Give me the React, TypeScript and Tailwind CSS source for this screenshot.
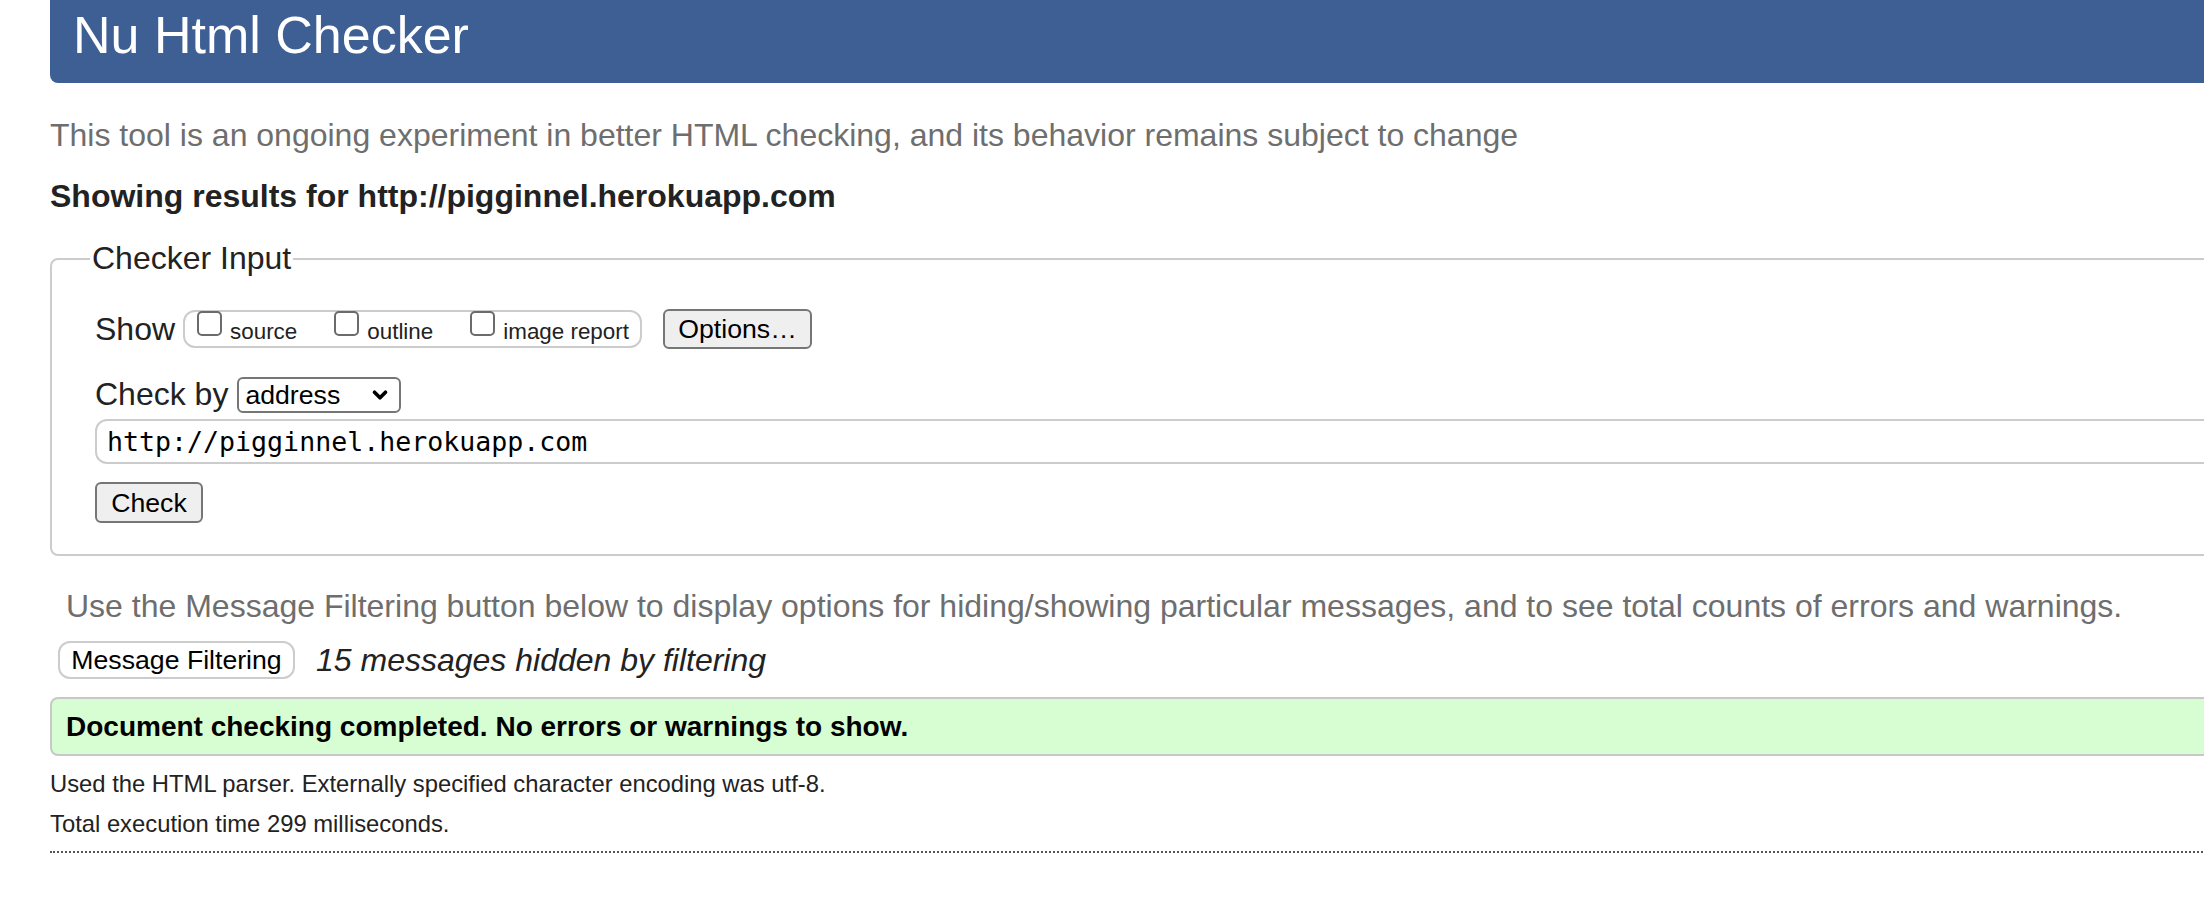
import { ChevronDown } from 'lucide-react';

export default function App() {
  const options = ['source', 'outline', 'image report'];

  return (
    <div className="w-[2204px] h-[920px] overflow-hidden bg-white font-['Liberation_Sans',Arial,sans-serif] text-[#222]">
      <div className="ml-[50px] w-[2300px] flex flex-col">
        <h1 className="h-[83px] pt-[5px] pl-[23px] bg-[#3e5f93] rounded-bl-[8px] text-white text-[52px] leading-[60px] font-normal">
          Nu Html Checker
        </h1>

        <p className="mt-[34px] text-[32px] leading-[37px] text-[#6e6e6e]">
          This tool is an ongoing experiment in better HTML checking, and its behavior remains subject to change
        </p>
        <p className="mt-[24px] text-[32px] leading-[37px] font-bold">
          Showing results for http://pigginnel.herokuapp.com
        </p>

        <fieldset className="mt-[25px] border-2 border-[#cccccc] rounded-[8px] pl-[43px] pt-[32px] pb-[31px]">
          <legend className="-ml-[5px] px-[2px] text-[32px] leading-[37px]">Checker Input</legend>

          <div className="flex items-center h-[40px]">
            <span className="text-[32px] leading-[37px]">Show</span>
            <div className="ml-[8px] h-[38px] w-[459px] border-2 border-[#cccccc] rounded-[12px] flex items-start pl-[12px]">
              {options.map((label, i) => (
                <label key={label} className={`flex items-start ${i > 0 ? 'ml-[37px]' : ''}`}>
                  <span className="mt-[-1px] w-[25px] h-[25px] border-2 border-[#6b6b6b] rounded-[5px] bg-white" />
                  <span className="ml-[8px] mt-[7px] text-[22.4px] leading-[25px]">{label}</span>
                </label>
              ))}
            </div>
            <button className="ml-[21px] h-[40px] w-[149px] bg-[#efefef] border-2 border-[#767676] rounded-[6px] text-[26.67px] leading-[30px] text-black">
              Options…
            </button>
          </div>

          <div className="mt-[27px] flex items-center h-[37px]">
            <span className="text-[32px] leading-[37px]">Check by</span>
            <div className="ml-[9px] h-[36px] w-[164px] border-2 border-[#767676] rounded-[6px] bg-white flex items-center pl-[6px] pr-[8px] justify-between">
              <span className="text-[26.67px] leading-[30px] text-black">address</span>
              <ChevronDown className="w-[22px] h-[22px] text-black" strokeWidth={4} />
            </div>
          </div>

          <div className="mt-[6px] h-[45px] border-2 border-[#cccccc] rounded-[12px] flex items-center pl-[10px]">
            <span className="font-['DejaVu_Sans_Mono',monospace] text-[26.6px] leading-[30px] text-black">
              http://pigginnel.herokuapp.com
            </span>
          </div>

          <button className="mt-[18px] h-[41px] w-[108px] bg-[#efefef] border-2 border-[#767676] rounded-[6px] text-[26.67px] leading-[30px] text-black">
            Check
          </button>
        </fieldset>

        <p className="mt-[32px] ml-[16px] text-[32px] leading-[37px] text-[#6e6e6e] whitespace-nowrap">
          Use the Message Filtering button below to display options for hiding/showing particular messages, and to see total counts of errors and warnings.
        </p>

        <div className="mt-[16px] flex items-center">
          <button className="ml-[8px] h-[38px] w-[237px] bg-white border-2 border-[#cccccc] rounded-[12px] text-[26.67px] leading-[30px] text-black">
            Message Filtering
          </button>
          <span className="ml-[21px] text-[32px] leading-[37px] italic">15 messages hidden by filtering</span>
        </div>

        <div className="mt-[18px] h-[59px] bg-[#d7fdd3] border-2 border-[#c8c8c8] rounded-[8px] flex items-center pl-[14px]">
          <span className="text-[28px] leading-[32px] font-bold text-black">
            Document checking completed. No errors or warnings to show.
          </span>
        </div>

        <p className="mt-[8px] text-[23.8px] leading-[40px]">
          Used the HTML parser. Externally specified character encoding was utf-8.
        </p>
        <p className="text-[23.8px] leading-[40px]">Total execution time 299 milliseconds.</p>

        <div className="mt-[7px] border-t-2 border-dotted border-[#555]" />
      </div>
    </div>
  );
}
